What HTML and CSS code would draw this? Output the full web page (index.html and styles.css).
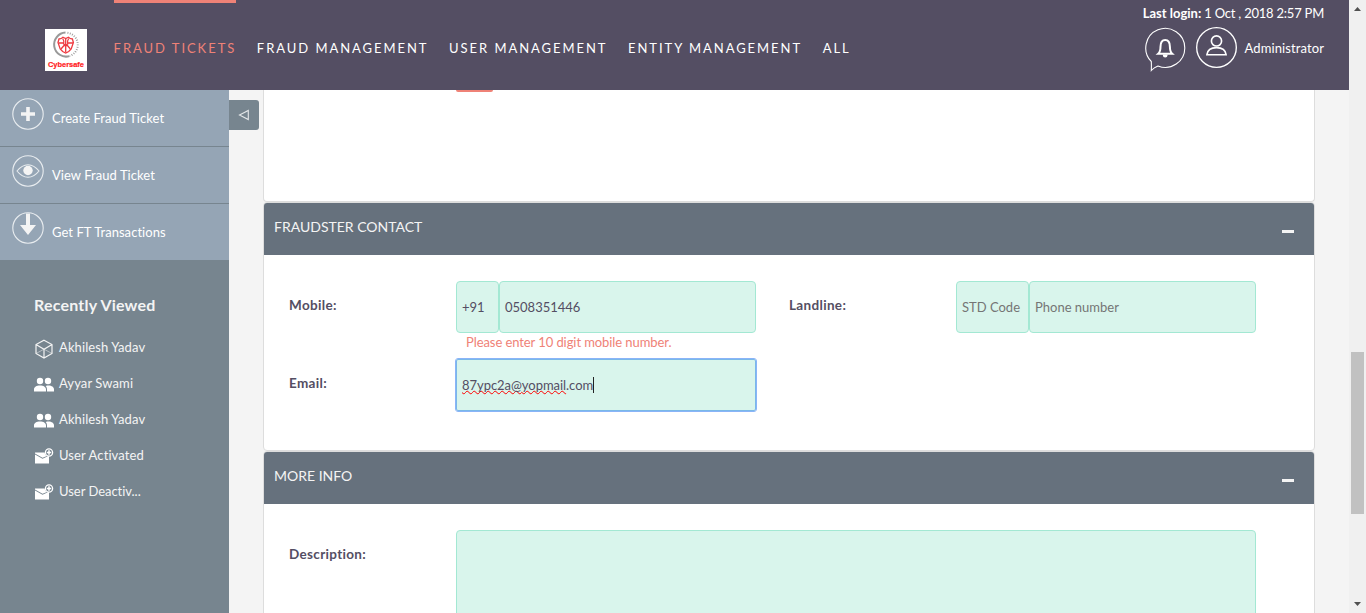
FILE: index.html
```html
<!DOCTYPE html>
<html lang="en">
<head>
<meta charset="utf-8">
<title>Fraud Tickets</title>
<link rel="stylesheet" href="styles.css">
</head>
<body>
<div class="window">
  <div class="app">
    <header class="topbar">
      <svg class="logo" viewBox="0 0 42 42">
        <rect width="42" height="42" fill="#fff"/>
        <path d="M20.500 3.600A12 12 0 1 0 24.500 27.100" fill="none" stroke="#999" stroke-width="2"/>
        <path d="M22.500 3.800A12 12 0 0 1 25 26.900" fill="none" stroke="#999" stroke-width="2" stroke-dasharray=".9 1.500"/>
        <path d="M14 10q2.500 0 4-1.800l2.700 1.300 2.700-1.300q1.500 1.800 4 1.800l1 3.500-2.200 6.500-2.500 2.500-3 1.500-3-1.500-2.500-2.500-2.200-6.500z" fill="#fff" stroke="#ee3a40" stroke-width="1.300"/>
        <path d="M20.700 10v13M17.700 9.500q2 3 1 5.500l2 1.500 2-1.500q-1-2.500 1-5.500M13.500 14h5.200M22.700 14H28M16 20l3-3.500h3.400l3 3.500" fill="none" stroke="#ee3a40" stroke-width="1.300"/>
        <text x="3" y="37.500" textLength="36" lengthAdjust="spacingAndGlyphs" class="logo-text">Cybersafe</text>
      </svg>
      <nav class="nav">
        <a class="nav-item active">FRAUD TICKETS</a>
        <a class="nav-item">FRAUD MANAGEMENT</a>
        <a class="nav-item">USER MANAGEMENT</a>
        <a class="nav-item">ENTITY MANAGEMENT</a>
        <a class="nav-item">ALL</a>
      </nav>
      <div class="account">
        <div class="login"><b>Last login:</b><span class="login-time"> 1 Oct , 2018 2:57 PM</span></div>
        <div class="user">
          <svg class="bell" viewBox="0 0 42 46" fill="none" stroke="#fff">
            <path d="M6.300 34.500A19.500 19.500 0 1 1 13 39Q9 40.500 6.300 43.500Q6.500 38.500 6.300 34.500z" stroke-width="1.100"/>
            <path d="M13.200 26.800h14q-2.300-2-2.300-7c0-4-1.500-6.700-4.700-6.700s-4.700 2.700-4.700 6.700q0 5-2.300 7z" stroke-width="2"/>
            <path d="M17.900 27.500h4.600v1q0 2-2.300 2t-2.300-2z" fill="#fff" stroke="none"/>
          </svg>
          <svg class="avatar" viewBox="0 0 42 42" fill="none" stroke="#fff">
            <circle cx="21" cy="21" r="20.300" stroke-width="1.400"/>
            <circle cx="21" cy="14.300" r="5.200" stroke-width="1.700"/>
            <path d="M11.200 28.400c.6-5 4.500-7.300 9.800-7.300s9.200 2.300 9.800 7.300z" stroke-width="1.700"/>
          </svg>
          <span class="user-name">Administrator</span>
        </div>
      </div>
    </header>
    <div class="body">
      <aside class="sidebar">
        <a class="action">
          <svg class="action-icon" viewBox="0 0 32 32"><circle cx="16" cy="16" r="15.200" class="ring"/><path d="M14.200 9h3.600v5.200H23v3.600h-5.200V23h-3.600v-5.200H9v-3.600h5.200z" fill="#f4f4f4"/></svg>
          <span>Create Fraud Ticket</span>
        </a>
        <a class="action">
          <svg class="action-icon" viewBox="0 0 32 32"><circle cx="16" cy="16" r="15.200" class="ring"/><path d="M5 16Q10 9.700 16 9.700T27 16Q22 22.300 16 22.300T5 16z" class="ring"/><circle cx="16" cy="15.500" r="4.700" fill="#f4f4f4"/></svg>
          <span>View Fraud Ticket</span>
        </a>
        <a class="action">
          <svg class="action-icon" viewBox="0 0 32 32"><circle cx="16" cy="16" r="15.200" class="ring"/><path d="M14 1.500h4V13h6l-8 10L8 13h6z" fill="#f4f4f4"/></svg>
          <span>Get FT Transactions</span>
        </a>
        <section class="recent">
          <h2 class="recent-title">Recently Viewed</h2>
          <div class="recent-item"><svg viewBox="0 0 20 20" class="recent-icon"><path d="M10 1.200l8 4.300v9L10 19l-8-4.500v-9zM2 5.500l8 4.700 8-4.700M10 10.200V19" fill="none" stroke="#f4f4f4" stroke-width="1.200"/><path d="M2 14.500l8-4.300 8 4.300" fill="none" stroke="#f4f4f4" stroke-width=".5"/></svg><span>Akhilesh Yadav</span></div>
          <div class="recent-item"><svg viewBox="0 0 20 20" class="recent-icon"><use href="#people"/></svg><span>Ayyar Swami</span></div>
          <div class="recent-item"><svg viewBox="0 0 20 20" class="recent-icon"><use href="#people"/></svg><span>Akhilesh Yadav</span></div>
          <div class="recent-item"><svg viewBox="0 0 20 20" class="recent-icon"><use href="#mail"/></svg><span>User Activated</span></div>
          <div class="recent-item"><svg viewBox="0 0 20 20" class="recent-icon"><use href="#mail"/></svg><span class="tight">User Deactiv...</span></div>
        </section>
      </aside>
      <main class="main">
        <a class="collapse"><svg viewBox="0 0 12 12" width="12" height="12"><path d="M10.300 1.500v9L1.500 6z" fill="none" stroke="#e4e7e9" stroke-width="1.100"/></svg></a>
        <div class="panels">
          <section class="panel first"><div class="button-edge"></div></section>
          <section class="panel contact">
            <div class="panel-head"><span>FRAUDSTER CONTACT</span><i class="minus"></i></div>
            <div class="form">
              <label class="label">Mobile:</label>
              <div class="field">
                <div class="inputs"><div class="input code">+91</div><div class="input grow">0508351446</div></div>
                <div class="error">Please enter 10 digit mobile number.</div>
              </div>
              <label class="label second">Landline:</label>
              <div class="inputs"><div class="input std placeholder">STD Code</div><div class="input grow placeholder">Phone number</div></div>
              <label class="label">Email:</label>
              <div class="input focused"><span class="misspelt">87ypc2a@</span><span class="misspelt">yopmail</span>.com<i class="caret"></i></div>
            </div>
          </section>
          <section class="panel more">
            <div class="panel-head"><span>MORE INFO</span><i class="minus"></i></div>
            <div class="form">
              <label class="label">Description:</label>
              <div class="input area"></div>
            </div>
          </section>
        </div>
      </main>
    </div>
  </div>
  <div class="scrollbar">
    <svg width="17" height="17" viewBox="0 0 17 17"><path d="M5 11l3.500-4 3.500 4z" fill="#505050"/></svg>
    <div class="track"><div class="thumb"></div></div>
    <svg width="17" height="17" viewBox="0 0 17 17"><path d="M5 6l3.500 4L12 6z" fill="#505050"/></svg>
  </div>
</div>
<svg width="0" height="0" class="defs">
  <defs>
    <g id="people" fill="#fff"><circle cx="6" cy="6" r="3.200"/><circle cx="14" cy="6" r="3.200"/><path d="M0 16.500v-2c0-2.500 2.500-4 6-4s6 1.500 6 4v2zM13 16.500v-2c0-1.500-.5-2.700-1.300-3.500 4.500-1.300 8.300.5 8.300 3.500v2z"/></g>
    <g id="mail"><path d="M1 7.500l7.500 4.200 6.500-3v7.800H1z" fill="#fff"/><path d="M1 5.500h9.500Q11 8 13 9l-4.500 1.700L1 6.500z" fill="#fff"/><circle cx="15" cy="5.500" r="3.600" fill="#77858f" stroke="#fff" stroke-width="1.300"/><path d="M15 3.300v4.400M12.800 5.500h4.400" stroke="#fff" stroke-width="1.600"/></g>
  </defs>
</svg>
</body>
</html>
```
FILE: styles.css
```css
* { box-sizing: border-box; }
body { margin: 0; overflow: hidden; font: 14px/20px Lato, "Liberation Sans", sans-serif; color: #544e63; }
svg { display: block; flex: none; }
.defs { display: none; }
.window { display: flex; height: 613px; }
.app { width: 1349px; height: 613px; overflow: hidden; }

.topbar { display: flex; height: 90px; padding-left: 45px; background: #544e63; color: #fff; }
.logo { width: 42px; height: 42px; margin-top: 29px; }
.logo-text { font: bold 7px "Liberation Sans", sans-serif; fill: #ff1d25; stroke: #ff1d25; stroke-width: .2px; }
.nav { display: flex; gap: 20.6px; margin-left: 26.6px; font-size: 13px; letter-spacing: 1.95px; white-space: nowrap; }
.nav-item { height: 90px; padding-top: 35px; border-top: 3px solid transparent; }
.nav-item.active { border-color: #ef8277; color: #ef8277; }
.account { margin-left: auto; padding: 3px 25px 0 0; font-size: 13px; white-space: nowrap; }
.login { text-align: right; }
.login-time { letter-spacing: -.23px; }
.user { display: flex; justify-content: flex-end; margin-top: 4px; }
.bell { width: 42px; height: 46px; }
.avatar { width: 41px; height: 41px; margin: 0 8px 0 9px; }
.user-name { margin-top: 11px; letter-spacing: .1px; }

.body { display: flex; height: 523px; }
.sidebar { width: 229px; background: #77858f; color: #fff; font-size: 13px; letter-spacing: .05px; }
.action { display: flex; height: 57px; padding: 8px 0 0 12px; gap: 8px; background: #95a5b5; border-bottom: 1px solid #77858f; }
.action-icon { width: 32px; height: 32px; }
.ring { fill: none; stroke: #e9edf0; stroke-width: 1.1; }
.action span { margin-top: 10px; }
.recent { padding: 34px 0 0 34px; }
.recent-title { margin: 0 0 22px; font-size: 16px; line-height: 20px; letter-spacing: .2px; color: #f4f4f4; }
.recent-item { display: flex; height: 36px; gap: 5px; letter-spacing: .1px; color: #f4f4f4; }
.tight { letter-spacing: -.03px; }
.recent-icon { width: 20px; height: 20px; margin-top: 2px; }

.main { display: flex; flex: 1; align-items: flex-start; background: #f4f4f4; }
.collapse { display: flex; align-items: center; justify-content: center; width: 30px; height: 30px; margin: 10px 4px 0 0; background: #77858f; border-radius: 0 3px 3px 0; }
.panels { width: 1052px; }
.panel { background: #fff; border: 1px solid #ddd; border-radius: 4px; }
.first { height: 112px; border-top: 0; border-radius: 0 0 4px 4px; }
.button-edge { width: 37px; height: 2px; margin-left: 192px; background: #ef8277; border-radius: 0 0 3px 3px; }
.contact { height: 249px; }
.more { height: 300px; }
.panel-head { display: flex; justify-content: space-between; height: 52px; padding: 14px 20px 0 10px; background: #66717d; color: #f4f4f4; border-radius: 3px 3px 0 0; }
.minus { width: 12px; height: 3px; margin-top: 13px; background: #f4f4f4; }
.form { display: grid; grid-template-columns: 167px 300px 200px 300px; grid-auto-rows: min-content; padding: 26px 25px; }
.label { padding-top: 14px; font-weight: bold; font-size: 13.5px; letter-spacing: .33px; }
.second { padding-left: 33px; }
.inputs { display: flex; height: 52px; }
.input { height: 52px; padding: 15px 5px; font-size: 13px; background: #d9f5ec; border: 1px solid #a3e8d3; border-radius: 4px; white-space: nowrap; }
.code { width: 43px; }
.std { width: 73px; }
.grow { flex: 1; }
.placeholder { color: #757575; }
.error { height: 26px; padding-left: 10px; line-height: 19px; font-size: 13px; letter-spacing: -.08px; color: #ef8277; }
.focused { outline: 1px solid #8ab4f8; border-color: #7ab8e8; border-radius: 2px; letter-spacing: -.04px; }
.misspelt { text-decoration: underline wavy #f00 1px; text-underline-offset: 0; text-decoration-skip-ink: none; }
.caret { display: inline-block; width: 1px; height: 16px; background: #222; vertical-align: -3px; }
.area { grid-column: 2 / 5; width: 800px; height: 150px; }

.scrollbar { display: flex; flex-direction: column; width: 17px; background: #f0f0f0; }
.track { flex: 1; padding: 335px 2px 0; }
.thumb { height: 162px; background: #c1c1c1; }
```
